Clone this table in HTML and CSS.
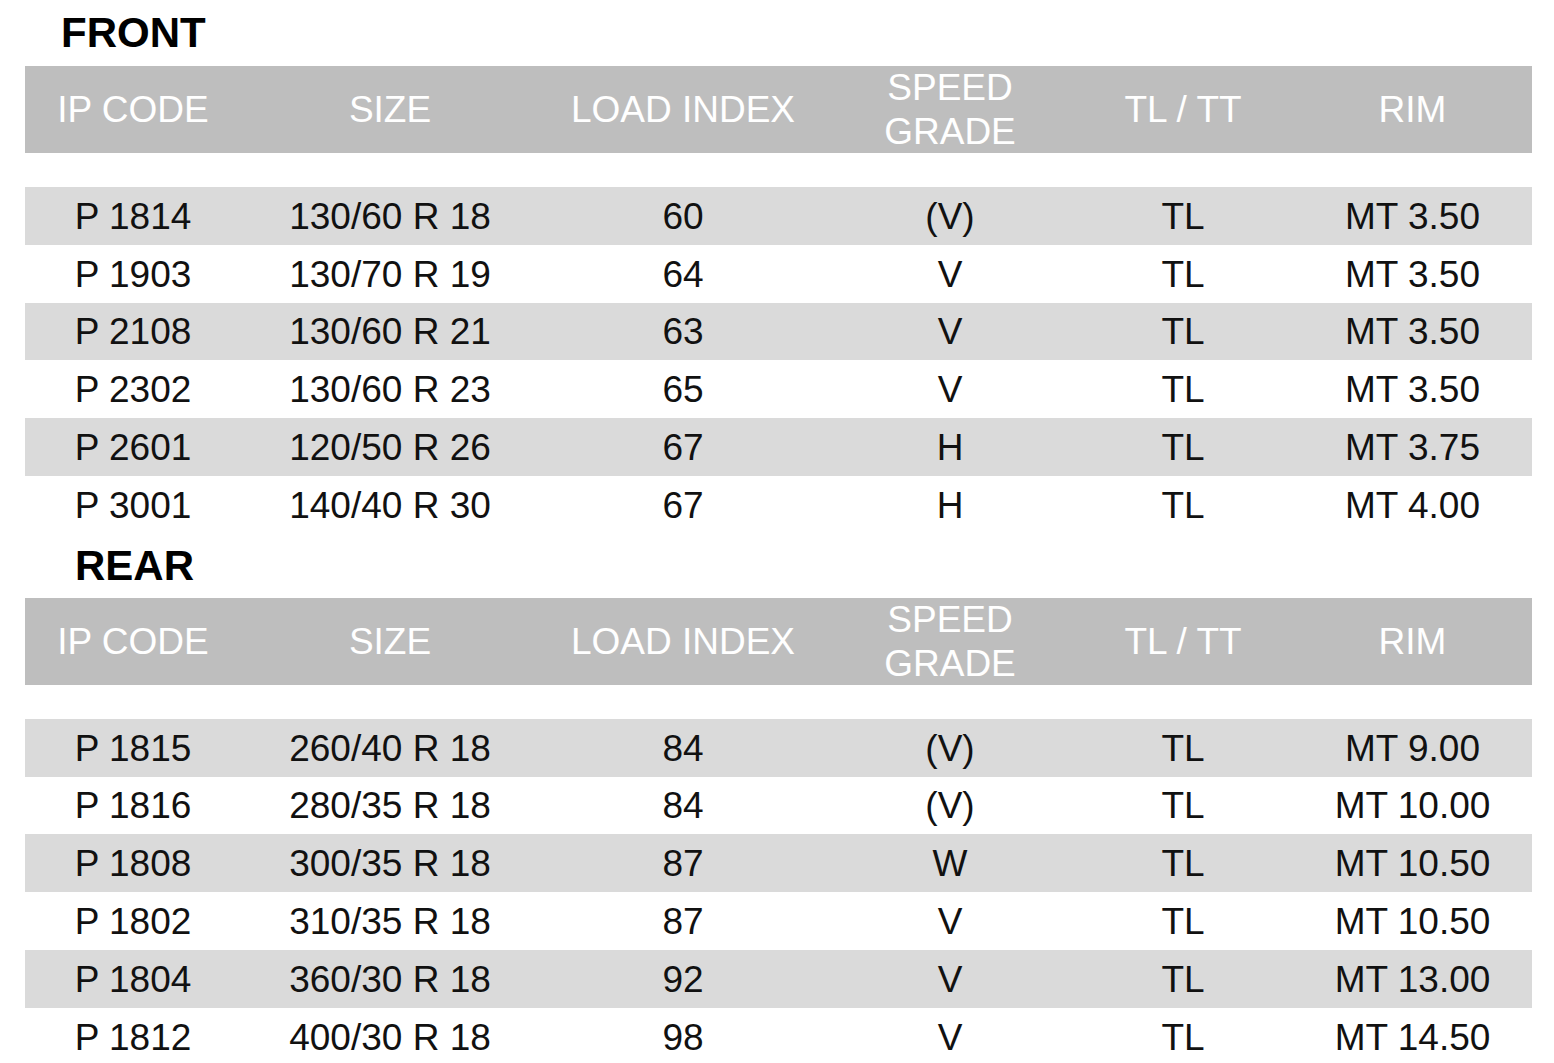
FILE: index.html
```html
<!DOCTYPE html>
<html lang="en">
<head>
<meta charset="utf-8">
<title>Tyre sizes</title>
<link rel="stylesheet" href="styles.css">
</head>
<body>
<main class="page">
  <section class="group">
    <h2 class="group-title group-title--front">FRONT</h2>
    <div class="head">
      <div class="cell">IP CODE</div>
      <div class="cell">SIZE</div>
      <div class="cell">LOAD INDEX</div>
      <div class="cell cell--two">SPEED<br>GRADE</div>
      <div class="cell">TL / TT</div>
      <div class="cell">RIM</div>
    </div>
    <div class="rows">
      <div class="row"><div class="cell">P 1814</div><div class="cell">130/60 R 18</div><div class="cell">60</div><div class="cell">(V)</div><div class="cell">TL</div><div class="cell">MT 3.50</div></div>
      <div class="row"><div class="cell">P 1903</div><div class="cell">130/70 R 19</div><div class="cell">64</div><div class="cell">V</div><div class="cell">TL</div><div class="cell">MT 3.50</div></div>
      <div class="row"><div class="cell">P 2108</div><div class="cell">130/60 R 21</div><div class="cell">63</div><div class="cell">V</div><div class="cell">TL</div><div class="cell">MT 3.50</div></div>
      <div class="row"><div class="cell">P 2302</div><div class="cell">130/60 R 23</div><div class="cell">65</div><div class="cell">V</div><div class="cell">TL</div><div class="cell">MT 3.50</div></div>
      <div class="row"><div class="cell">P 2601</div><div class="cell">120/50 R 26</div><div class="cell">67</div><div class="cell">H</div><div class="cell">TL</div><div class="cell">MT 3.75</div></div>
      <div class="row"><div class="cell">P 3001</div><div class="cell">140/40 R 30</div><div class="cell">67</div><div class="cell">H</div><div class="cell">TL</div><div class="cell">MT 4.00</div></div>
    </div>
  </section>
  <section class="group">
    <h2 class="group-title group-title--rear">REAR</h2>
    <div class="head">
      <div class="cell">IP CODE</div>
      <div class="cell">SIZE</div>
      <div class="cell">LOAD INDEX</div>
      <div class="cell cell--two">SPEED<br>GRADE</div>
      <div class="cell">TL / TT</div>
      <div class="cell">RIM</div>
    </div>
    <div class="rows">
      <div class="row"><div class="cell">P 1815</div><div class="cell">260/40 R 18</div><div class="cell">84</div><div class="cell">(V)</div><div class="cell">TL</div><div class="cell">MT 9.00</div></div>
      <div class="row"><div class="cell">P 1816</div><div class="cell">280/35 R 18</div><div class="cell">84</div><div class="cell">(V)</div><div class="cell">TL</div><div class="cell">MT 10.00</div></div>
      <div class="row"><div class="cell">P 1808</div><div class="cell">300/35 R 18</div><div class="cell">87</div><div class="cell">W</div><div class="cell">TL</div><div class="cell">MT 10.50</div></div>
      <div class="row"><div class="cell">P 1802</div><div class="cell">310/35 R 18</div><div class="cell">87</div><div class="cell">V</div><div class="cell">TL</div><div class="cell">MT 10.50</div></div>
      <div class="row"><div class="cell">P 1804</div><div class="cell">360/30 R 18</div><div class="cell">92</div><div class="cell">V</div><div class="cell">TL</div><div class="cell">MT 13.00</div></div>
      <div class="row"><div class="cell">P 1812</div><div class="cell">400/30 R 18</div><div class="cell">98</div><div class="cell">V</div><div class="cell">TL</div><div class="cell">MT 14.50</div></div>
    </div>
  </section>
</main>
</body>
</html>
```

FILE: styles.css
```css
html, body {
  margin: 0;
  padding: 0;
  background: #ffffff;
}

body {
  font-family: "Liberation Sans", Arial, sans-serif;
  color: #111111;
  overflow: hidden;
}

.page {
  padding: 0 22px 0 25px;
}

.group-title {
  margin: 0;
  font-size: 42px;
  font-weight: bold;
  color: #000000;
}

.group-title--front {
  height: 66px;
  line-height: 66px;
  padding-left: 36px;
}

.group-title--rear {
  height: 64px;
  line-height: 64px;
  padding-left: 50px;
}

.head,
.row {
  display: grid;
  grid-template-columns: 216px 298px 288px 246px 220px 239px;
  align-items: center;
  text-align: center;
}

.head {
  height: 87px;
  background: #bebebe;
  color: #ffffff;
  font-size: 37px;
  margin-bottom: 34px;
}

.cell--two {
  line-height: 44px;
}

.row {
  height: 57.8px;
  font-size: 37px;
  line-height: 1;
  padding-top: 1px;
  box-sizing: border-box;
}

.row:nth-child(odd) {
  background: #dadada;
}
```
